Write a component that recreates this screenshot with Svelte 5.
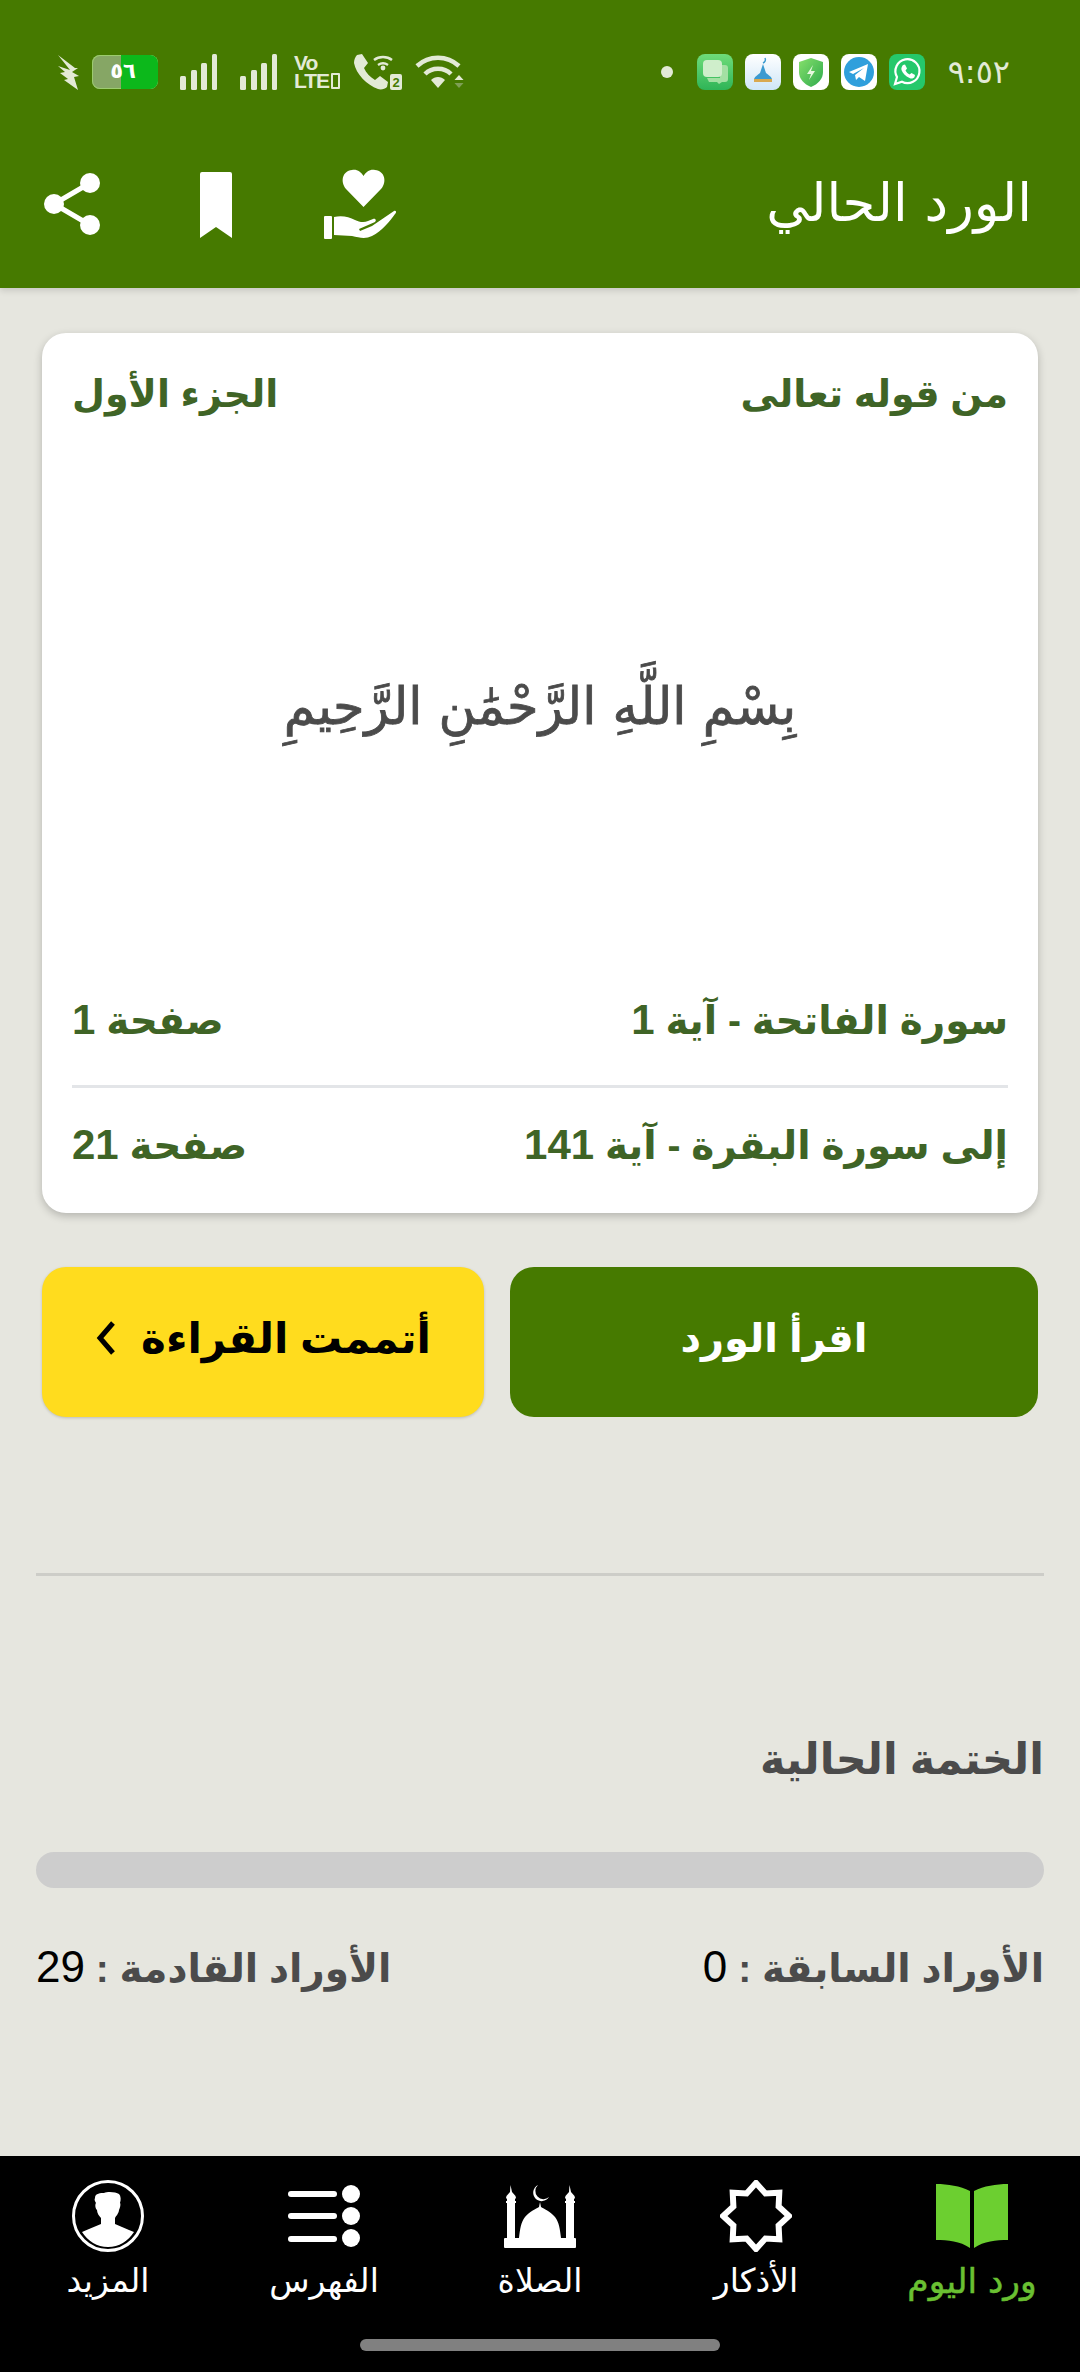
<script>
  const rows = [
    { a: 'سورة الفاتحة - آية ', an: '1', b: 'صفحة ', bn: '1' },
    { a: 'إلى سورة البقرة - آية ', an: '141', b: 'صفحة ', bn: '21' }
  ];
  const starPts = (() => {
    const pts = [];
    for (let i = 0; i < 16; i++) {
      const r = i % 2 === 0 ? 33 : 24.5;
      const t = (i * Math.PI) / 8 - Math.PI / 2;
      pts.push(`${(36 + r * Math.cos(t)).toFixed(1)},${(36 + r * Math.sin(t)).toFixed(1)}`);
    }
    return pts.join(' ');
  })();
</script>

<div class="screen" dir="rtl">
  <header class="appbar">
    <div class="status" dir="ltr">
      <div class="st-left">
        <svg width="22" height="36" viewBox="0 0 22 36"><path fill="#e3ead6" d="M0 12L12 16 0 1l17 13 3 0-6 4 7 4-5 1 4 13L6 26l4-1-8-6 5-1z"/></svg>
        <div class="battery"><span class="batt-fill"></span><span class="batt-text">٥٦</span></div>
        <svg class="sig" width="38" height="36" viewBox="0 0 38 36"><g fill="#e3ead6"><rect x="0" y="22" width="6" height="14" rx="1.5"/><rect x="11" y="16" width="6" height="20" rx="1.5"/><rect x="21" y="9" width="6" height="27" rx="1.5"/><rect x="32" y="0" width="5" height="36" rx="1.5"/></g></svg>
        <svg class="sig" width="38" height="36" viewBox="0 0 38 36"><g fill="#e3ead6"><rect x="0" y="22" width="6" height="14" rx="1.5"/><rect x="11" y="16" width="6" height="20" rx="1.5"/><rect x="21" y="9" width="6" height="27" rx="1.5"/><rect x="32" y="0" width="5" height="36" rx="1.5"/></g></svg>
        <div class="volte"><span>Vo</span><span class="lte">LTE<i class="box"></i></span></div>
        <svg width="50" height="36" viewBox="0 0 50 36"><path fill="#e3ead6" d="M4 1l5-1 6 9-4 5c2 5 6 9 11 12l5-4 8 6-1 5c-2 2-6 3-9 2C14 31 3 20 1 9c0-3 1-6 3-8z"/><g fill="none" stroke="#e3ead6" stroke-width="2.4"><path d="M21 6c5-4 13-4 18 0"/><path d="M25 11c3-2 7-2 10 0"/></g><circle cx="30" cy="14" r="2.4" fill="#e3ead6"/><rect x="37" y="20" width="12" height="16" rx="2" fill="#e3ead6"/><text x="43" y="33" class="sim">2</text></svg>
        <svg width="50" height="36" viewBox="0 0 50 36"><g fill="none" stroke="#e3ead6" stroke-width="4.5"><path d="M2 12c12-11 30-11 42 0"/><path d="M10 20c7-7 19-7 26 0"/></g><path fill="#e3ead6" d="M16 26c4-4 10-4 14 0l-7 8z"/><path fill="#e3ead6" d="M44 21l4.500 5h-9z"/><path fill="#7f9f55" d="M44 34l4.500-5h-9z"/></svg>
      </div>
      <div class="st-right">
        <span class="dot"></span>
        <svg class="app" viewBox="0 0 36 36"><defs><linearGradient id="msg" x1="0" y1="0" x2="0" y2="1"><stop offset="0" stop-color="#6fdc7a"/><stop offset="1" stop-color="#2fb457"/></linearGradient></defs><rect width="36" height="36" rx="8" fill="url(#msg)"/><path fill="#a3e0a3" d="M24 11h4a3 3 0 0 1 3 3v11a3 3 0 0 1-3 3h-3l-3 2-2-2h-8l-2-4h13z"/><rect x="6" y="6" width="19" height="17" rx="4" fill="#cfeecb"/></svg>
        <svg class="app" viewBox="0 0 36 36"><defs><linearGradient id="msq" x1="0" y1="0" x2="0" y2="1"><stop offset="0" stop-color="#ffffff"/><stop offset="1" stop-color="#cfe6f7"/></linearGradient></defs><rect width="36" height="36" rx="8" fill="url(#msq)"/><path fill="#3b9ad0" d="M18 10c1 3 2 6 3 9 2 2 5 3 6 6H9c1-3 4-4 6-6 1-3 2-6 3-9z"/><rect x="9" y="25" width="18" height="3" fill="#d9a94f"/><path fill="none" stroke="#3b9ad0" stroke-width="1.500" d="M20 4c1 2 0 4-2 5"/></svg>
        <svg class="app" viewBox="0 0 36 36"><defs><linearGradient id="sh" x1="0" y1="0" x2="1" y2="1"><stop offset="0" stop-color="#86e06b"/><stop offset="1" stop-color="#2eaa4d"/></linearGradient></defs><rect width="36" height="36" rx="8" fill="#fff"/><path fill="url(#sh)" d="M18 4l12 4v10c0 7-5 12-12 15C11 30 6 25 6 18V8z"/><path fill="#e7f8df" d="M20 11l-6 9h4l-2 6 6-9h-4z"/></svg>
        <svg class="app" viewBox="0 0 36 36"><rect width="36" height="36" rx="8" fill="#fff"/><circle cx="18" cy="18" r="15" fill="#2f9fdc"/><path fill="#fff" d="M8 18l19-8-3 17-6-4-3 3-1-5 9-7-11 6z"/></svg>
        <svg class="app" viewBox="0 0 36 36"><rect width="36" height="36" rx="8" fill="#25c86b"/><path fill="none" stroke="#fff" stroke-width="2.200" d="M6 30l2-7a12 12 0 1 1 5 4.800z"/><path fill="#fff" d="M14 11l2-.5 2 4-1.500 2c1 2 2.500 3 4 4l2-1.500 3.500 2-.5 2c-1 1.500-3 2-5 1-4-1.500-7-5-8-8-.5-2 .500-4 1.500-5z"/></svg>
        <span class="time">٩:٥٢</span>
      </div>
    </div>
    <div class="toolbar">
      <h1>الورد الحالي</h1>
      <div class="actions" dir="ltr">
        <svg class="a-share" width="58" height="64" viewBox="0 0 58 64"><g fill="#fff"><circle cx="46" cy="11" r="10"/><circle cx="46" cy="53" r="10"/><circle cx="10" cy="32" r="10"/></g><path stroke="#fff" stroke-width="5" d="M46 11L10 32l36 21" fill="none"/></svg>
        <svg class="a-mark" width="32" height="66" viewBox="0 0 32 66"><path fill="#fff" d="M2 0h28a2 2 0 0 1 2 2v64L16 55 0 66V2a2 2 0 0 1 2-2z"/></svg>
        <svg class="a-hand" width="74" height="70" viewBox="0 0 74 70"><path fill="#fff" d="M41.500 38L24 20C18 13 20 2 30 1c5-1 9 2 11.500 6C44 3 48 0 53 1c10 1 12 12 6 19z"/><rect x="2" y="47" width="8" height="23" rx="1" fill="#fff"/><path fill="#fff" d="M12 48c8-2 15 0 21 3 4 2 9 3 13 1l5-2c2-1 4 1 2 3l-16 7 1 2 12-5 22-15c2-1 3 1 1 3-5 7-13 17-23 22-6 3-12 2-20 0l-18-1z"/></svg>
      </div>
    </div>
  </header>

  <main class="content">
    <section class="card">
      <div class="row top">
        <span>من قوله تعالى</span>
        <span>الجزء الأول</span>
      </div>
      <p class="verse">بِسْمِ اللَّهِ الرَّحْمَٰنِ الرَّحِيمِ</p>
      <div class="row">
        <span>{rows[0].a}<b class="num">{rows[0].an}</b></span>
        <span>{rows[0].b}<b class="num">{rows[0].bn}</b></span>
      </div>
      <hr class="rule" />
      <div class="row">
        <span>{rows[1].a}<b class="num">{rows[1].an}</b></span>
        <span>{rows[1].b}<b class="num">{rows[1].bn}</b></span>
      </div>
    </section>

    <div class="buttons">
      <button class="btn primary">اقرأ الورد</button>
      <button class="btn done">
        <span>أتممت القراءة</span>
        <svg width="22" height="36" viewBox="0 0 22 36"><path d="M18 3L5 18l13 15" fill="none" stroke="#000" stroke-width="5"/></svg>
      </button>
    </div>

    <hr class="sep" />

    <section class="khatma">
      <h2>الختمة الحالية</h2>
      <div class="track"></div>
      <div class="stats">
        <span>الأوراد السابقة : <i class="n">0</i></span>
        <span>الأوراد القادمة : <i class="n">29</i></span>
      </div>
    </section>
  </main>

  <nav class="tabs">
    <div class="tab active">
      <svg width="72" height="72" viewBox="0 -4 72 72"><path fill="#6ccf30" d="M0 0c12 0 24 2 34 7v57C24 57 12 56 0 56zM72 0c-12 0-24 2-34 7v57c10-7 22-8 34-8z"/></svg>
      <span>ورد اليوم</span>
    </div>
    <div class="tab">
      <svg width="72" height="72" viewBox="0 0 72 72"><polygon points={starPts} fill="none" stroke="#fff" stroke-width="6"/></svg>
      <span>الأذكار</span>
    </div>
    <div class="tab">
      <svg width="72" height="72" viewBox="0 -4 72 72"><g fill="#fff"><path d="M6.500 1l1.500 7 3.500 4 .5 2-1 1v2h1v2h-1v36H3V19H2v-2h1v-2l-1-1 .5-2L6 8z"/><path d="M65.500 1l1.500 7 3.500 4 .5 2-1 1v2h1v2h-1v36h-8V19h-1v-2h1v-2l-1-1 .5-2L65 8z"/><path d="M36 18l1 5c3 2 9 4 14 10 4 5 5 12 6 21H15c1-9 2-16 6-21 5-6 11-8 14-10z"/><rect x="0" y="54" width="72" height="10" rx="1"/><path d="M34 1a8.500 8.500 0 1 0 11 12 8 8 0 0 1-11-12z"/></g></svg>
      <span>الصلاة</span>
    </div>
    <div class="tab">
      <svg width="72" height="72" viewBox="0 -5 72 72"><g fill="#fff"><rect x="0" y="6" width="49" height="6" rx="3"/><rect x="0" y="28" width="49" height="6" rx="3"/><rect x="0" y="51" width="49" height="6" rx="3"/><circle cx="63" cy="9" r="9"/><circle cx="63" cy="31" r="9"/><circle cx="63" cy="53" r="9"/></g></svg>
      <span>الفهرس</span>
    </div>
    <div class="tab">
      <svg width="72" height="72" viewBox="0 0 72 72"><circle cx="36" cy="36" r="34.500" fill="none" stroke="#fff" stroke-width="3"/><path fill="#fff" d="M23 18c0-5 6-5 9-5 4-2 12-1 15 1 2 2 2 6 1 9 1 1 0 5-1 7 0 3-3 6-4 8v6l14 6 5 2c-6 9-15 15-26 15s-20-6-26-15l7-3 12-5v-6c-2-2-4-5-4-8-2-2-2-6-1-7-1-2-2-3-1-5z"/></svg>
      <span>المزيد</span>
    </div>
    <div class="home"></div>
  </nav>
</div>

<style>
  :global(body) {
    margin: 0;
    background: #e6e6df;
  }
  .screen {
    width: 1080px;
    height: 2372px;
    display: flex;
    flex-direction: column;
    background: #e6e6df;
    font-family: "Liberation Sans", "DejaVu Sans", sans-serif;
    overflow: hidden;
  }
  .appbar {
    height: 288px;
    flex: none;
    background: #467a00;
    box-shadow: 0 3px 6px rgba(0, 0, 0, 0.12);
    display: flex;
    flex-direction: column;
    position: relative;
  }
  .status {
    height: 54px;
    margin-top: 54px;
    padding: 0 70px 0 58px;
    display: flex;
    justify-content: space-between;
    align-items: flex-start;
  }
  .st-left {
    display: flex;
    align-items: flex-start;
    gap: 12px;
  }
  .st-left svg { flex: none; }
  .sig { margin-right: 10px; }
  .sig + .sig { margin-right: 0; }
  .battery {
    position: relative;
    width: 66px;
    height: 34px;
    border-radius: 8px;
    background: #86a665;
    overflow: hidden;
    box-shadow: inset 0 0 0 1px #9ccc6e;
    margin-top: 1px;
    margin-right: 10px;
  }
  .batt-fill {
    position: absolute;
    left: 29px;
    top: 0;
    right: 0;
    bottom: 0;
    background: #0cb81b;
  }
  .batt-text {
    position: absolute;
    left: 0;
    right: 4px;
    top: 2px;
    text-align: center;
    color: #fff;
    font: bold 21px/28px "DejaVu Sans", sans-serif;
  }
  .volte {
    width: 46px;
    color: #e3ead6;
    display: flex;
    flex-direction: column;
    font: bold 21px/18px "Liberation Sans", sans-serif;
    letter-spacing: -1px;
    white-space: nowrap;
    margin: 0 1px 0 4px;
  }
  .lte {
    display: flex;
    align-items: center;
    gap: 2px;
  }
  .box {
    display: block;
    width: 5px;
    height: 12px;
    border: 2px solid #e3ead6;
    border-radius: 1px;
  }
  .sim {
    font: bold 13px "Liberation Sans", sans-serif;
    fill: #467a00;
    text-anchor: middle;
  }
  .st-right {
    display: flex;
    align-items: center;
    gap: 12px;
  }
  .app {
    width: 36px;
    height: 36px;
    flex: none;
  }
  .dot {
    width: 12px;
    height: 12px;
    border-radius: 50%;
    background: #e3ead6;
    margin-right: 12px;
  }
  .time {
    color: #e3ead6;
    font: 32px/36px "DejaVu Sans", sans-serif;
    margin-left: 11px;
  }
  .toolbar {
    flex: 1;
    display: flex;
    justify-content: space-between;
    align-items: flex-start;
    padding: 0 48px 0 44px;
  }
  h1 {
    margin: 60px 0 0;
    color: #fff;
    font: 53px/70px "DejaVu Sans", sans-serif;
  }
  .actions {
    display: flex;
    align-items: flex-start;
    margin-top: 61px;
  }
  .a-share { margin-top: 3px; margin-right: 98px; }
  .a-mark { margin-top: 3px; margin-right: 90px; }

  .content {
    flex: 1;
    padding: 45px 36px 0;
    display: flex;
    flex-direction: column;
  }
  .card {
    margin: 0 6px;
    height: 880px;
    box-sizing: border-box;
    background: #fff;
    border-radius: 24px;
    box-shadow: 0 3px 8px rgba(0, 0, 0, 0.22);
    padding: 36px 30px 0;
    display: flex;
    flex-direction: column;
  }
  .row {
    display: flex;
    justify-content: space-between;
    align-items: baseline;
    color: #3f6426;
    font-weight: 700;
    font-size: 39px;
    line-height: 50px;
    height: 50px;
  }
  .row.top { font-size: 38px; }
  .num { font-size: 42px; font-weight: 700; }
  .verse {
    flex: 1;
    margin: 0;
    display: flex;
    align-items: center;
    justify-content: center;
    color: #4b4b4b;
    font: 51px/80px "DejaVu Sans", sans-serif;
    -webkit-text-stroke: 0.8px #4b4b4b;
  }
  .rule {
    width: 100%;
    height: 3px;
    border: 0;
    flex: none;
    margin: 40px 0 32px;
    background: #e3e5e8;
  }
  .card > .row:last-child { margin-bottom: 43px; }
  .buttons {
    margin: 54px 6px 0;
    display: flex;
    gap: 26px;
  }
  .btn {
    height: 150px;
    border: 0;
    border-radius: 24px;
    font: 700 40px "Liberation Sans", "DejaVu Sans", sans-serif;
    display: flex;
    align-items: center;
    justify-content: center;
    gap: 24px;
    padding: 0 0 8px;
  }
  .primary {
    flex: 1;
    background: #467a00;
    color: #fff;
  }
  .done {
    width: 442px;
    flex: none;
    background: #ffdc1e;
    color: #000;
    font-size: 42px;
    box-shadow: 0 1px 3px rgba(0, 0, 0, 0.18);
  }
  .sep {
    height: 3px;
    border: 0;
    background: #cdcdc8;
    margin: 156px 0 0;
  }
  .khatma { margin-top: 150px; }
  h2 {
    margin: 0;
    color: #4b4b4b;
    font: 700 43px/66px "Liberation Sans", "DejaVu Sans", sans-serif;
  }
  .track {
    height: 36px;
    margin-top: 60px;
    border-radius: 18px;
    background: #cdcdcd;
  }
  .stats {
    margin-top: 54px;
    height: 50px;
    display: flex;
    justify-content: space-between;
    align-items: baseline;
    color: #4b4b4b;
    font-weight: 700;
    font-size: 39px;
    line-height: 50px;
  }
  .n {
    font-style: normal;
    font-weight: 400;
    font-size: 44px;
    color: #000;
  }

  .tabs {
    height: 216px;
    flex: none;
    background: #000;
    display: flex;
    flex-direction: row-reverse;
    direction: ltr;
    position: relative;
  }
  .tab {
    width: 216px;
    height: 116px;
    margin-top: 24px;
    display: flex;
    flex-direction: column;
    align-items: center;
    color: #fff;
    font: 33px/44px "DejaVu Sans", sans-serif;
    direction: rtl;
  }
  .tab svg {
    flex: none;
    margin-bottom: 7px;
  }
  .tab.active {
    color: #6ac032;
    font-size: 34.5px;
    -webkit-text-stroke: 0.5px #6ac032;
  }
  .home {
    position: absolute;
    left: 360px;
    bottom: 21px;
    width: 360px;
    height: 12px;
    border-radius: 6px;
    background: #808080;
  }
</style>
